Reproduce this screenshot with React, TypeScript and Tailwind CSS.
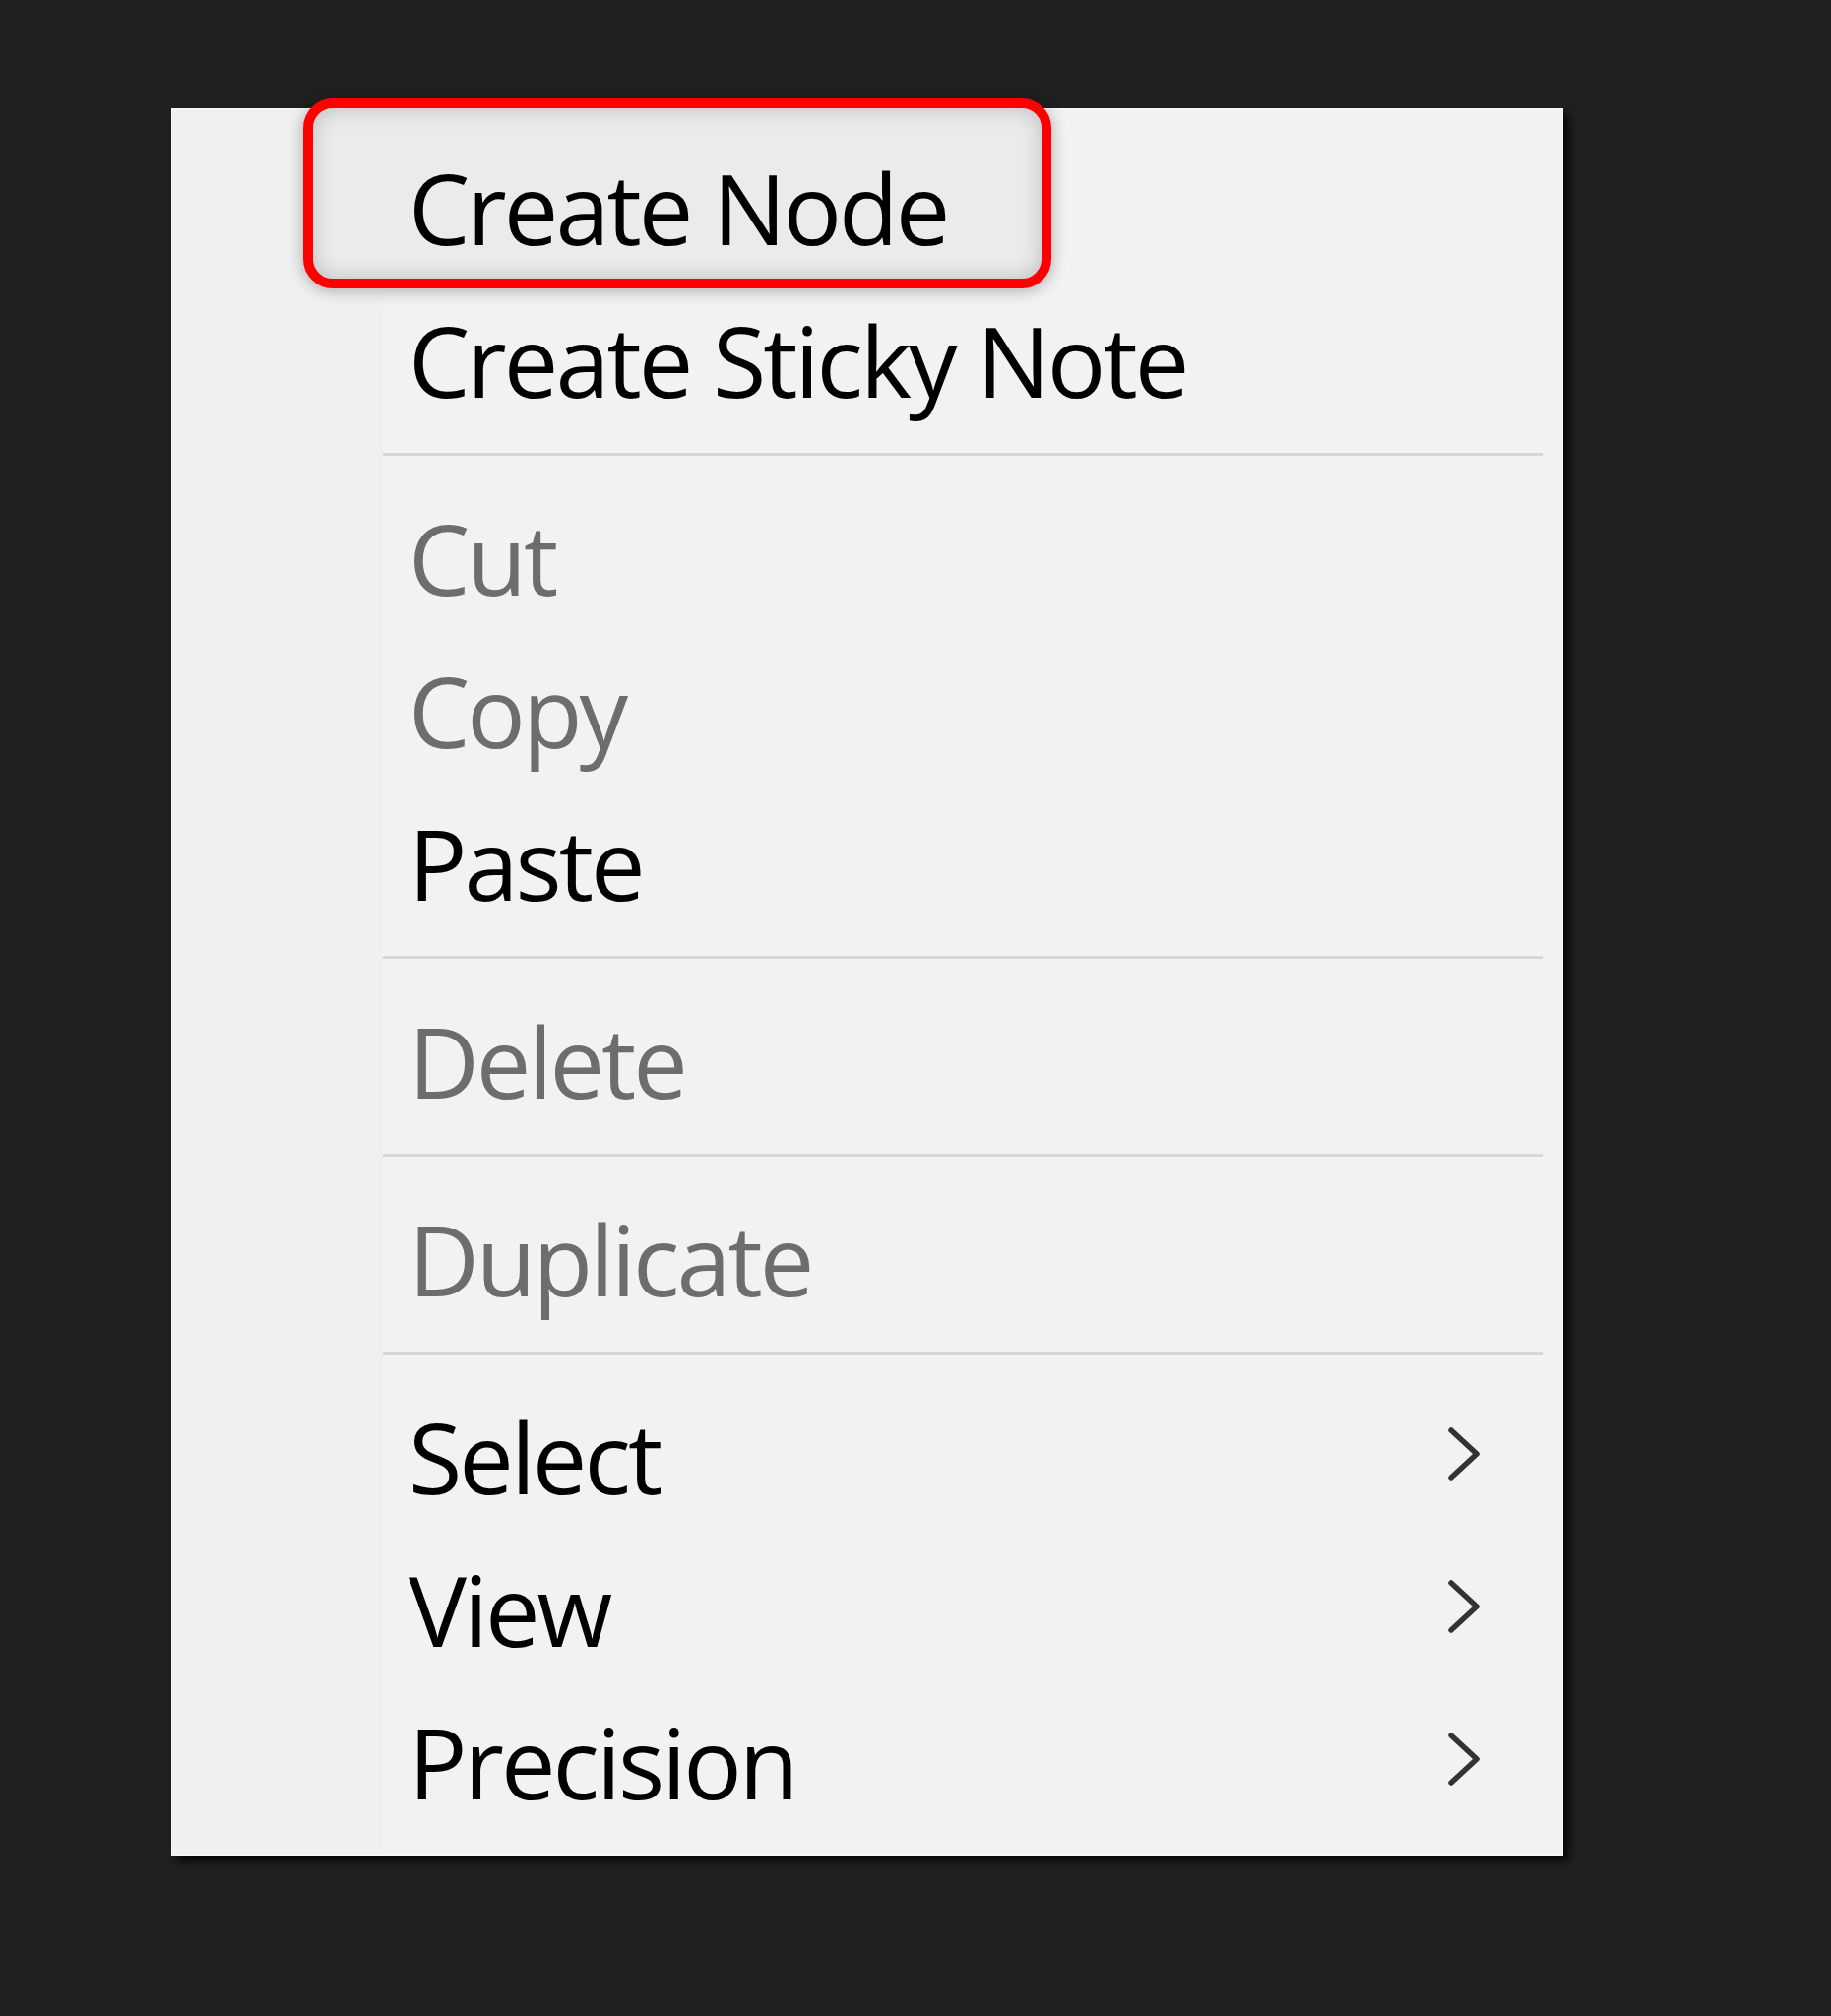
type Item =
  | { kind: 'item'; label: string; disabled?: boolean; submenu?: boolean }
  | { kind: 'sep' };

const ITEMS: Item[] = [
  { kind: 'item', label: 'Create Node' },
  { kind: 'item', label: 'Create Sticky Note' },
  { kind: 'sep' },
  { kind: 'item', label: 'Cut', disabled: true },
  { kind: 'item', label: 'Copy', disabled: true },
  { kind: 'item', label: 'Paste' },
  { kind: 'sep' },
  { kind: 'item', label: 'Delete', disabled: true },
  { kind: 'sep' },
  { kind: 'item', label: 'Duplicate', disabled: true },
  { kind: 'sep' },
  { kind: 'item', label: 'Select', submenu: true },
  { kind: 'item', label: 'View', submenu: true },
  { kind: 'item', label: 'Precision', submenu: true },
];

// Submenu arrow
const Chevron = () => (
  <svg width="34" height="56" viewBox="0 0 34 56" fill="none" className="-mt-[8px]">
    <polyline
      points="4,4 30,28 4,52"
      stroke="#333333"
      strokeWidth="5.5"
      strokeLinecap="round"
      strokeLinejoin="round"
    />
  </svg>
);

const MenuRow = ({ label, disabled, submenu }: { label: string; disabled?: boolean; submenu?: boolean }) => (
  <div className="flex h-[155px] items-center justify-between pl-[240px] pr-[83px]">
    <span
      className={`-mt-[2px] text-[99px] leading-none tracking-[-3px] ${disabled ? 'text-[#6d6d6d]' : 'text-black'}`}
    >
      {label}
    </span>
    {submenu && <Chevron />}
  </div>
);

const Separator = () => (
  <div className="ml-[214px] mr-[20px] pt-[16px] pb-[27px]">
    <div className="h-[3px] bg-[#d6d6d6]" />
  </div>
);

export default function App() {
  return (
    <div
      className="min-h-screen w-full bg-[#202020] pl-[174px] pt-[110px]"
      style={{ fontFamily: '"Open Sans", "Noto Sans", sans-serif' }}
    >
      <div className="relative w-[1414px] border border-[#f8f8f8] bg-[linear-gradient(to_right,#f0f0f0_214px,#f4f4f4_214px,#f4f4f4_215px,#f2f2f2_215px)] pt-[23px] pb-[16px] shadow-[6px_6px_8px_rgba(0,0,0,0.75)]">
        {/* hover highlight on first item */}
        <div className="absolute left-[133px] top-[-11px] h-[193px] w-[760px] rounded-[30px] border-[10px] border-[#ff0000] bg-[#ebebeb] shadow-[0_2px_16px_rgba(0,0,0,0.3),inset_0_0_22px_rgba(0,0,0,0.2)]" />

        <div className="relative flex flex-col">
          {ITEMS.map((item, i) =>
            item.kind === 'sep' ? (
              <Separator key={i} />
            ) : (
              <MenuRow key={i} label={item.label} disabled={item.disabled} submenu={item.submenu} />
            )
          )}
        </div>
      </div>
    </div>
  );
}
